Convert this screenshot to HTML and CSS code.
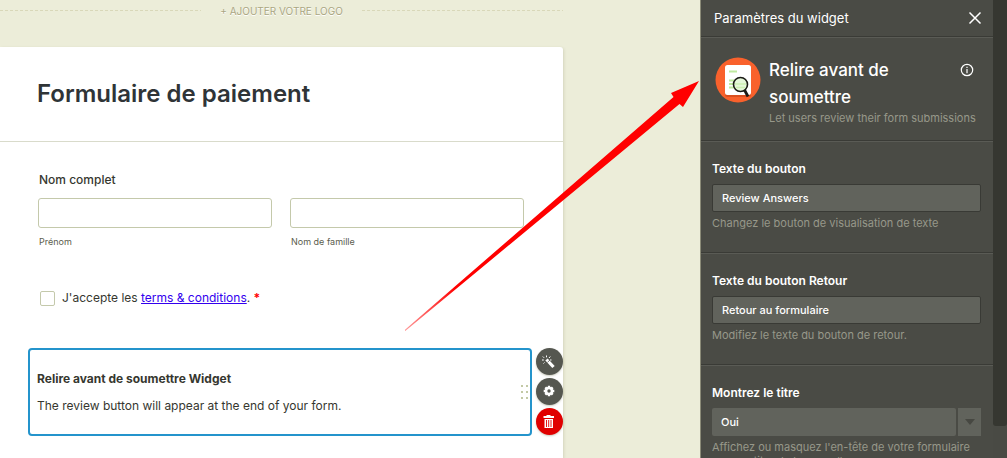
FILE: index.html
```html
<!DOCTYPE html>
<html lang="fr">
<head>
  <meta charset="UTF-8">
  <meta name="viewport" content="width=device-width, initial-scale=1.0">
  <title>Formulaire de paiement</title>
  <link rel="stylesheet" href="styles.css">
</head>
<body>
  <main class="canvas">
    <button class="add-logo" type="button">+ AJOUTER VOTRE LOGO</button>

    <form class="form-card">
      <header class="form-header">
        <h1>Formulaire de paiement</h1>
      </header>

      <!-- Full name -->
      <fieldset class="question">
        <legend>Nom complet</legend>
        <div class="name-row">
          <div class="name-field">
            <input type="text" id="first-name">
            <label for="first-name">Prénom</label>
          </div>
          <div class="name-field">
            <input type="text" id="last-name">
            <label for="last-name">Nom de famille</label>
          </div>
        </div>
      </fieldset>

      <!-- Terms -->
      <div class="terms">
        <input type="checkbox" id="terms">
        <label for="terms">J'accepte les <a href="#">terms &amp; conditions</a>. <span class="required">*</span></label>
      </div>

      <!-- Selected widget -->
      <div class="widget-row">
        <section class="widget">
          <div class="widget-text">
            <h2>Relire avant de soumettre Widget</h2>
            <p>The review button will appear at the end of your form.</p>
          </div>
          <svg class="drag-handle" width="8" height="16" viewBox="0 0 8 16" fill="#c3c9a6">
            <path d="M0 1h2v2H0zM5 1h2v2H5zM0 7h2v2H0zM5 7h2v2H5zM0 13h2v2H0zM5 13h2v2H5z"/>
          </svg>
        </section>
        <div class="actions">
          <button type="button" class="action" aria-label="Assistant">
            <svg width="27" height="27" viewBox="0 0 27 27" fill="none" stroke="#fff">
              <path d="M10.500 11.500l7 7.500" stroke-width="3.200"/>
              <path d="M11.500 14.300l2.600-2.400" stroke="#555750" stroke-width=".8"/>
              <path d="M10.500 7.500v1.800M14.300 8.500l-1.300 1.500M15.500 12h-1.500M6.800 8.500l1.300 1.300M6 12h1.800M7.500 15.500l1-1" stroke-width="1"/>
            </svg>
          </button>
          <button type="button" class="action" aria-label="Paramètres">
            <svg width="27" height="27" viewBox="0 0 27 27" fill="none" stroke="#fff">
              <circle cx="13" cy="13" r="3" stroke-width="2.600"/>
              <path d="M13 7.700v2M13 16.300v2M7.700 13h2M16.300 13h2M9.300 9.300l1.500 1.500M15.200 15.200l1.500 1.500M16.700 9.300l-1.500 1.500M10.800 15.200l-1.500 1.500" stroke-width="2.400"/>
            </svg>
          </button>
          <button type="button" class="action delete" aria-label="Supprimer">
            <svg width="27" height="27" viewBox="0 0 27 27" fill="#fff">
              <path d="M10.500 7h4v1h3.500v2H7.500V8h3z"/>
              <path d="M8.500 11h8.500v9H8.500z"/>
              <path d="M10.500 12v7M12.700 12v7M15 12v7" stroke="#e00000" stroke-width=".9"/>
            </svg>
          </button>
        </div>
      </div>
    </form>

    <svg class="arrow" width="294" height="250" viewBox="0 0 294 250">
      <defs>
        <linearGradient id="tail" gradientUnits="userSpaceOnUse" x1="0" y1="249" x2="50" y2="206">
          <stop offset="0" stop-color="#f00" stop-opacity=".4"/>
          <stop offset="1" stop-color="#f00"/>
        </linearGradient>
      </defs>
      <path d="M-1 249.600L268.500 16L266 12L294 0L278 26L274.500 23L0 250.200Z" fill="url(#tail)"/>
    </svg>
  </main>

  <aside class="panel">
    <header class="panel-header">
      <h2>Paramètres du widget</h2>
      <button type="button" class="icon-button" aria-label="Fermer">
        <svg width="14" height="14" viewBox="0 0 14 14" fill="none" stroke="#fff" stroke-width="1.500">
          <path d="M1.500 1.500l11 11M12.500 1.500l-11 11"/>
        </svg>
      </button>
    </header>

    <section class="widget-info">
      <svg class="widget-logo" width="46" height="46" viewBox="0 0 46 46">
        <circle cx="23" cy="23" r="22.500" fill="#f9612c"/>
        <rect x="10" y="9" width="26" height="31" rx="2.500" fill="#da4f1f"/>
        <rect x="10" y="8" width="26" height="30" rx="2.500" fill="#fff"/>
        <path d="M14 14.500h8M14 23.500h6M14 27h6M14 30.500h6" stroke="#bfeaa0" stroke-width="1.800"/>
        <circle cx="25.500" cy="27.500" r="7" fill="#e6f8da" stroke="#1b1b16" stroke-width="1.600"/>
        <path d="M20 27h11M21 30.500h9" stroke="#cdf0b4" stroke-width="1.600"/>
        <path d="M29.500 33l3.500 6.500" stroke="#1b1b16" stroke-width="2.800"/>
      </svg>
      <div class="widget-about">
        <h3>Relire avant de soumettre</h3>
        <p>Let users review their form submissions</p>
      </div>
      <button type="button" class="icon-button" aria-label="Informations">
        <svg width="14" height="14" viewBox="0 0 14 14" fill="none" stroke="#fff" stroke-width="1.200">
          <circle cx="7" cy="7" r="5.700"/>
          <path d="M7 3.700v1.300M7 6v4.300"/>
        </svg>
      </button>
    </section>

    <section class="setting">
      <label for="button-text">Texte du bouton</label>
      <input type="text" id="button-text" value="Review Answers">
      <p>Changez le bouton de visualisation de texte</p>
    </section>

    <section class="setting">
      <label for="back-text">Texte du bouton Retour</label>
      <input type="text" id="back-text" value="Retour au formulaire">
      <p>Modifiez le texte du bouton de retour.</p>
    </section>

    <section class="setting">
      <label for="show-title">Montrez le titre</label>
      <div class="select">
        <select id="show-title">
          <option>Oui</option>
          <option>Non</option>
        </select>
        <span class="select-arrow"></span>
      </div>
      <p>Affichez ou masquez l'en-tête de votre formulaire comme titre de la nouvelle page</p>
    </section>
  </aside>

  <div class="scrollbar"><div class="scroll-thumb"></div></div>
</body>
</html>
```

FILE: styles.css
```css
* {
  margin: 0;
  padding: 0;
  box-sizing: border-box;
}

body {
  display: flex;
  height: 100vh;
  overflow: hidden;
  font-family: Inter, "Liberation Sans", sans-serif;
  font-size: 12px;
  color: #36372f;
  background-color: #ecedd9;
}

button {
  border: none;
  background: none;
  font-family: inherit;
  cursor: pointer;
}

input,
select {
  font-family: inherit;
}

/* Form canvas */
.canvas {
  position: relative;
  flex: 1;
  display: flex;
  flex-direction: column;
  padding-right: 137px;
}

.add-logo {
  display: flex;
  align-items: center;
  gap: 19px;
  height: 47px;
  padding-bottom: 26px;
  font-size: 10px;
  white-space: nowrap;
  color: #aaa682;
  text-shadow: 0 1px 0 #fff;
}

.add-logo::before,
.add-logo::after {
  content: "";
  flex: 1;
  height: 1px;
  background: repeating-linear-gradient(90deg, #d9d8b9 0 3px, transparent 3px 5px);
}

.form-card {
  flex: 1;
  background-color: #fff;
  border-radius: 0 3px 0 0;
  box-shadow: 1px 1px 3px rgba(80, 80, 40, 0.15);
}

.form-header {
  padding: 30px 37px 31px;
  border-bottom: 1px solid #d9dbcb;
}

.form-header h1 {
  font-size: 24px;
  line-height: 33px;
  font-weight: 600;
  color: #2f3437;
}

.question {
  padding: 30px 39px 0 38px;
  border: none;
}

.question legend {
  float: left;
  width: 100%;
  padding-left: 1px;
  margin-bottom: 10px;
  font-weight: 500;
  line-height: 16px;
}

.name-row {
  display: flex;
  clear: both;
  gap: 18px;
}

.name-field {
  flex: 1;
}

.name-field input {
  display: block;
  width: 100%;
  height: 30px;
  border: 1px solid #c4c9ab;
  border-radius: 3px;
}

.name-field label {
  display: block;
  padding: 8px 1px 0;
  font-size: 9px;
  line-height: 12px;
  color: #5c5d4e;
}

.terms {
  display: flex;
  align-items: center;
  gap: 7px;
  padding: 41px 40px 0;
}

.terms input {
  appearance: none;
  width: 15px;
  height: 15px;
  border: 1px solid #c4c9ab;
  border-radius: 2px;
}

.terms label {
  line-height: 18px;
}

.terms a {
  color: #30e;
}

.required {
  font-weight: 700;
  color: #f00;
}

.widget-row {
  display: flex;
  gap: 4px;
  padding: 41px 0 0 28px;
}

.widget {
  flex: 1;
  display: flex;
  align-items: center;
  justify-content: space-between;
  height: 88px;
  padding: 0 1px 0 7px;
  border: 2px solid #2494cc;
  border-radius: 4px;
}

.widget h2 {
  font-size: 12px;
  line-height: 18px;
  font-weight: 700;
}

.widget p {
  margin-top: 9px;
  line-height: 18px;
}

.actions {
  display: flex;
  flex-direction: column;
  gap: 3px;
}

.action {
  width: 27px;
  height: 27px;
  border-radius: 50%;
  background-color: #555750;
  box-shadow: 0 1px 2px rgba(80, 80, 40, 0.3);
}

.action svg {
  display: block;
}

.action.delete {
  background-color: #e00000;
}

.arrow {
  position: absolute;
  right: 1px;
  top: 81px;
  pointer-events: none;
}

/* Settings panel */
.panel {
  width: 293px;
  overflow: hidden;
  border-left: 1px solid #8b8b78;
  background-color: #4a4b45;
  color: #fff;
}

.panel-header {
  display: flex;
  align-items: center;
  justify-content: space-between;
  height: 37px;
  padding: 0 11px 0 13px;
  border-bottom: 1px solid #3a3b36;
}

.panel-header h2 {
  font-size: 13px;
  font-weight: 400;
}

.icon-button svg {
  display: block;
}

.widget-info {
  display: flex;
  align-items: flex-start;
  gap: 8px;
  height: 104px;
  padding: 19px 19px 0 14px;
  border-top: 1px solid #5a5b55;
  border-bottom: 1px solid #3a3b36;
}

.widget-logo {
  flex: none;
}

.widget-about {
  flex: 1;
  white-space: nowrap;
}

.widget-about h3 {
  width: 140px;
  font-size: 17px;
  line-height: 27px;
  font-weight: 500;
  white-space: normal;
}

.widget-about p {
  width: 0;
  font-size: 11px;
  line-height: 14px;
  color: #97988a;
}

.widget-info .icon-button {
  margin-top: 6px;
}

.setting {
  height: 112px;
  padding: 19px 12px 0 11px;
  border-top: 1px solid #5a5b55;
  border-bottom: 1px solid #3a3b36;
}

.setting label {
  display: block;
  margin-bottom: 7px;
  font-size: 12px;
  line-height: 16px;
  font-weight: 600;
}

.setting input,
.setting select {
  display: block;
  width: 100%;
  height: 28px;
  padding: 0 9px;
  border: 1px solid #393a35;
  border-radius: 2px;
  background-color: #61635c;
  font-size: 11px;
  font-weight: 500;
  color: #fff;
}

.setting p {
  margin-top: 4px;
  font-size: 11px;
  line-height: 14px;
  color: #97988a;
}

.select {
  display: flex;
  gap: 2px;
}

.setting select {
  flex: 1;
  appearance: none;
  border: none;
}

.select-arrow {
  display: flex;
  align-items: center;
  justify-content: center;
  width: 23px;
  background-color: #61635c;
}

.select-arrow::before {
  content: "";
  border: 5px solid transparent;
  border-top: 6px solid #474842;
  border-bottom: none;
}

.scrollbar {
  width: 14px;
  background-color: #494a44;
}

.scroll-thumb {
  height: 93%;
  border-radius: 0 0 3px 3px;
  background-color: #363731;
}
```
